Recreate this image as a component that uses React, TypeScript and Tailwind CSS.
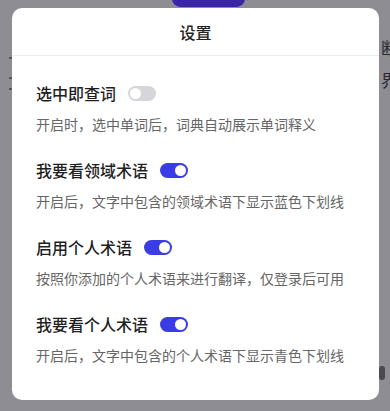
import React from "react";

const rows = [
  { title: "选中即查词", desc: "开启时，选中单词后，词典自动展示单词释义", on: false },
  { title: "我要看领域术语", desc: "开启后，文字中包含的领域术语下显示蓝色下划线", on: true },
  { title: "启用个人术语", desc: "按照你添加的个人术语来进行翻译，仅登录后可用", on: true },
  { title: "我要看个人术语", desc: "开启后，文字中包含的个人术语下显示青色下划线", on: true },
];

function Toggle({ on }: { on: boolean }) {
  return (
    <div
      className={
        on
          ? "flex h-[15px] w-[28px] items-center justify-end rounded-full bg-[#3a3de6] px-[2px]"
          : "flex h-[15px] w-[28px] items-center justify-start rounded-full bg-[#d6d6da] px-[2px]"
      }
    >
      <div className="h-[11px] w-[11px] rounded-full bg-white" />
    </div>
  );
}

export default function App() {
  return (
    <div
      className="relative h-[411px] w-[390px] overflow-hidden bg-[#8e8d93]"
      style={{ fontFamily: '"Noto Sans CJK SC", "Noto Sans", sans-serif' }}
    >
      {/* background page content */}
      <div className="absolute left-[172px] top-[-10px] h-[17px] w-[73px] rounded-[9px] bg-[#3a25a8]" />
      <div className="absolute left-[381px] top-[38px] flex flex-col gap-[12px] text-[17px] leading-[20px] text-[#2a2a2e]">
        <span>断</span>
        <span>界</span>
      </div>
      <div className="absolute left-[9px] top-[57px] h-[2px] w-[4px] bg-[#55545a]" />
      <div className="absolute left-[9px] top-[77px] h-[2px] w-[4px] bg-[#55545a]" />
      <div className="absolute left-[9px] top-[88px] h-[2px] w-[4px] bg-[#55545a]" />
      <div className="absolute left-[379px] top-[366px] h-[14px] w-[6px] rounded-[3px] bg-[#4a4950]" />

      {/* modal */}
      <div className="absolute left-[12px] top-[8px] flex h-[392px] w-[367px] flex-col rounded-[10px] bg-white">
        <div className="flex h-[48px] items-center justify-center border-b border-[#ececec] text-[16px] font-medium text-[#222]">
          设置
        </div>
        <div className="flex flex-col gap-[23px] px-[24px] pt-[25px]">
          {rows.map((r) => (
            <div key={r.title} className="flex flex-col gap-[8px]">
              <div className="flex h-[24px] items-center gap-[12px]">
                <span className="text-[16px] font-medium leading-[24px] text-[#1f1f1f]">{r.title}</span>
                <Toggle on={r.on} />
              </div>
              <div className="text-[14px] leading-[22px] text-[#666]">{r.desc}</div>
            </div>
          ))}
        </div>
      </div>
    </div>
  );
}
